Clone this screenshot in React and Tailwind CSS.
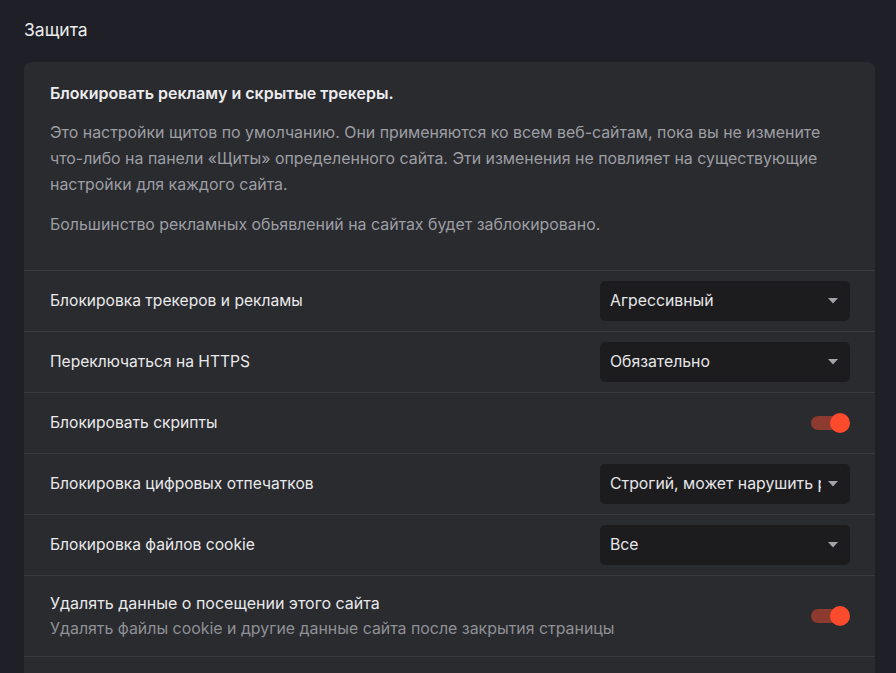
import React from "react";

const font = { fontFamily: "Inter, 'Noto Sans', sans-serif" };

function Select({ value }) {
  return (
    <div className="relative w-[250px] h-[40px] rounded-[5px] bg-[#1c1c1f] flex items-center pl-[10px] pr-[29px] overflow-hidden">
      <span className="text-[15.8px] text-[#e6e6e8] whitespace-nowrap overflow-hidden">{value}</span>
      <svg className="absolute right-[12px] top-[17px]" width="10" height="6" viewBox="0 0 10 6">
        <path d="M0 0 L10 0 L5 5.5 Z" fill="#a3a3a8" />
      </svg>
    </div>
  );
}

function Toggle() {
  return (
    <div className="relative w-[39px] h-[20px]">
      <div className="absolute left-0 top-[3px] w-[36px] h-[14px] rounded-full bg-[#8d3b30]" />
      <div className="absolute right-0 top-0 w-[20px] h-[20px] rounded-full bg-[#fb4a2c]" />
    </div>
  );
}

function Row({ label, children }) {
  return (
    <div className="h-[61px] border-t border-[#3a3b40] flex items-center justify-between pl-[26px] pr-[25px]">
      <span className="text-[15.6px] text-[#e9e9eb]">{label}</span>
      {children}
    </div>
  );
}

export default function App() {
  return (
    <div className="min-h-[673px] bg-[#1f2027] px-[24px] pt-[18px]" style={font}>
      <div className="text-[17.5px] leading-[24px] text-[#ececee] mb-[20px]">Защита</div>
      <div className="w-[851px] rounded-[8px] bg-[#2a2b2f] pb-[40px]">
        <div className="pt-[18px] pl-[26px] pr-[25px] pb-[32px]">
          <div className="text-[16px] leading-[26px] font-semibold text-[#ececee]">
            Блокировать рекламу и скрытые трекеры.
          </div>
          <p className="mt-[14px] text-[15.9px] leading-[26px] text-[#9d9ea3] w-[780px]">
            Это настройки щитов по умолчанию. Они применяются ко всем веб-сайтам, пока вы не измените что-либо на панели «Щиты» определенного сайта. Эти изменения не повлияет на существующие настройки для каждого сайта.
          </p>
          <p className="mt-[14px] text-[15.9px] leading-[26px] text-[#9d9ea3]">
            Большинство рекламных обьявлений на сайтах будет заблокировано.
          </p>
        </div>
        <Row label="Блокировка трекеров и рекламы">
          <Select value="Агрессивный" />
        </Row>
        <Row label="Переключаться на HTTPS">
          <Select value="Обязательно" />
        </Row>
        <Row label="Блокировать скрипты">
          <Toggle />
        </Row>
        <Row label="Блокировка цифровых отпечатков">
          <Select value="Строгий, может нарушить работу сайтов" />
        </Row>
        <Row label="Блокировка файлов cookie">
          <Select value="Все" />
        </Row>
        <div className="h-[81px] border-t border-[#3a3b40] flex items-center justify-between pl-[26px] pr-[25px]">
          <div className="flex flex-col">
            <span className="text-[16px] leading-[26px] text-[#e9e9eb]">Удалять данные о посещении этого сайта</span>
            <span className="text-[15.9px] leading-[26px] text-[#8f9095]">Удалять файлы cookie и другие данные сайта после закрытия страницы</span>
          </div>
          <Toggle />
        </div>
        <div className="h-[61px] border-t border-[#3a3b40]" />
      </div>
    </div>
  );
}
